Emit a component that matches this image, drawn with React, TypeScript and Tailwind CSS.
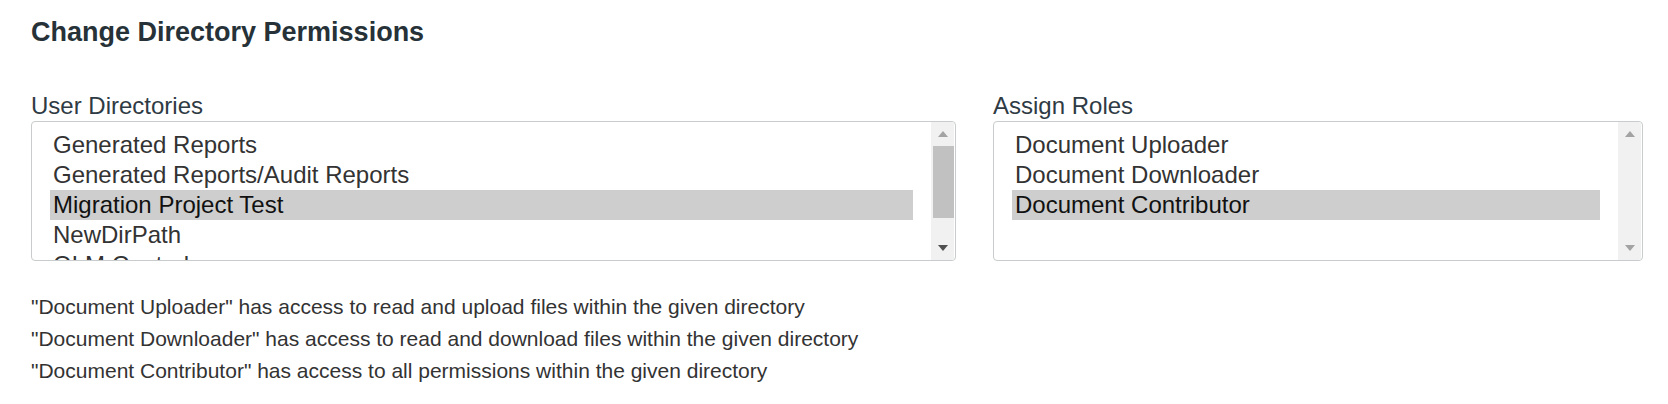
import { useState } from "react";

/* Fake listboxes so the classic scrollbar in the screenshot can be drawn. */

const directories = [
  "Generated Reports",
  "Generated Reports/Audit Reports",
  "Migration Project Test",
  "NewDirPath",
  "OLM Controls",
];

const roles = ["Document Uploader", "Document Downloader", "Document Contributor"];

function Arrow({ dir, color }: { dir: "up" | "down"; color: string }) {
  return (
    <svg width="10" height="6" viewBox="0 0 10 6" className="block">
      {dir === "up" ? (
        <polygon points="0,6 5,0 10,6" fill={color} />
      ) : (
        <polygon points="0,0 10,0 5,6" fill={color} />
      )}
    </svg>
  );
}

function ListBox({
  items,
  selected,
  onSelect,
  scrollable,
}: {
  items: string[];
  selected: string;
  onSelect: (v: string) => void;
  scrollable: boolean;
}) {
  return (
    <div className="mt-[1px] flex h-[140px] overflow-hidden rounded-[4px] border border-[#c8cccc] bg-white">
      <div className="min-w-0 flex-1 overflow-hidden px-[18px] pt-[8px]">
        {items.map((item) => (
          <div
            key={item}
            onClick={() => onSelect(item)}
            className={
              "h-[30px] cursor-default whitespace-nowrap pl-[3px] text-[24px] leading-[30px] " +
              (item === selected ? "bg-[#cecece] text-[#111]" : "text-[#333]")
            }
          >
            {item}
          </div>
        ))}
      </div>
      <div className="mr-[1px] flex w-[23px] flex-col bg-[#f1f1f1]">
        <div className="flex h-[24px] items-center justify-center">
          <Arrow dir="up" color="#a3a3a3" />
        </div>
        {scrollable ? (
          <div className="ml-[2px] h-[72px] bg-[#c1c1c1]" />
        ) : null}
        <div className="flex-1" />
        <div className="flex h-[24px] items-center justify-center">
          <Arrow dir="down" color={scrollable ? "#505050" : "#a3a3a3"} />
        </div>
      </div>
    </div>
  );
}

export default function App() {
  const [dir, setDir] = useState("Migration Project Test");
  const [role, setRole] = useState("Document Contributor");

  return (
    <div className="min-h-[404px] bg-white pl-[31px] pt-[16px] font-['Liberation_Sans',Arial,sans-serif]">
      <h2 className="text-[27px] font-bold leading-[32px] text-[#263238]">
        Change Directory Permissions
      </h2>

      <div className="mt-[44px] grid grid-cols-[925px_650px] gap-x-[37px]">
        <div>
          <label className="block text-[24px] leading-[28px] text-[#2f3b44]">User Directories</label>
          <ListBox items={directories} selected={dir} onSelect={setDir} scrollable />
        </div>
        <div>
          <label className="block text-[24px] leading-[28px] text-[#2f3b44]">Assign Roles</label>
          <ListBox items={roles} selected={role} onSelect={setRole} scrollable={false} />
        </div>
      </div>

      <div className="mt-[30px] text-[21px] leading-[32px] text-[#333]">
        <p>"Document Uploader" has access to read and upload files within the given directory</p>
        <p>"Document Downloader" has access to read and download files within the given directory</p>
        <p>"Document Contributor" has access to all permissions within the given directory</p>
      </div>
    </div>
  );
}
